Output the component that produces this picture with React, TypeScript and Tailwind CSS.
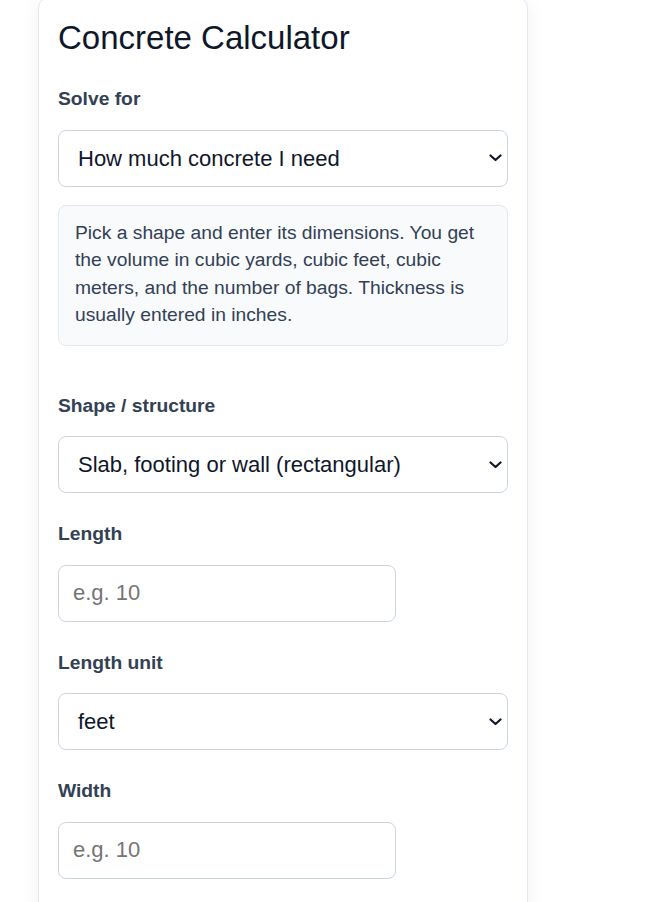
import { useState } from 'react'

function Chevron() {
  return (
    <svg
      className="pointer-events-none absolute right-[6px] top-1/2 -translate-y-1/2"
      width="13"
      height="8"
      viewBox="0 0 13 8"
      fill="none"
    >
      <path d="M1.5 1.5 L6.5 6 L11.5 1.5" stroke="#111827" strokeWidth="2.2" strokeLinecap="round" strokeLinejoin="round" />
    </svg>
  )
}

function Field({ label, children, className = '' }) {
  return (
    <div className={className}>
      <label className="block text-[19.25px] leading-[27.5px] font-bold text-[#334155] mb-[17px]">{label}</label>
      {children}
    </div>
  )
}

function Select({ value, onChange, options }) {
  return (
    <div className="relative w-full">
      <select
        value={value}
        onChange={(e) => onChange(e.target.value)}
        className="w-full h-[57px] appearance-none rounded-[8px] border border-[#cbd5e1] bg-white pl-[19px] pr-[30px] text-[22px] text-[#0f172a] outline-none"
      >
        {options.map((o) => (
          <option key={o} value={o}>
            {o}
          </option>
        ))}
      </select>
      <Chevron />
    </div>
  )
}

function NumberInput({ value, onChange }) {
  return (
    <input
      type="text"
      inputMode="decimal"
      value={value}
      onChange={(e) => onChange(e.target.value)}
      placeholder="e.g. 10"
      className="block w-[338px] h-[57px] rounded-[8px] border border-[#cbd5e1] bg-white px-[14px] text-[22px] text-[#0f172a] placeholder:text-[#757575] outline-none"
    />
  )
}

export default function App() {
  const [solveFor, setSolveFor] = useState('How much concrete I need')
  const [shape, setShape] = useState('Slab, footing or wall (rectangular)')
  const [length, setLength] = useState('')
  const [lengthUnit, setLengthUnit] = useState('feet')
  const [width, setWidth] = useState('')

  return (
    <div className="min-h-screen bg-white pl-[38px] font-['Liberation_Sans',Arial,sans-serif]">
      <div className="-mt-[3px] w-[490px] rounded-[11px] border border-[#e2e8f0] bg-white px-[19px] pt-[20px] pb-[40px] shadow-[0_4px_20px_rgba(15,23,42,0.06)]">
        <h1 className="text-[33px] leading-[40px] font-normal text-[#0f172a] mb-[27px]">Concrete Calculator</h1>

        <Field label="Solve for">
          <Select
            value={solveFor}
            onChange={setSolveFor}
            options={['How much concrete I need', 'How many bags I need', 'How much it will cost']}
          />
        </Field>

        <div className="mt-[18px] rounded-[8px] border border-[#e2e8f0] bg-[#f8fafc] pl-[16px] pr-[14px] pt-[13px] pb-[16px]">
          <p className="text-[19.25px] leading-[27.5px] text-[#334155]">
            Pick a shape and enter its dimensions. You get the volume in cubic yards, cubic feet, cubic meters, and the
            number of bags. Thickness is usually entered in inches.
          </p>
        </div>

        <Field label="Shape / structure" className="mt-[46px]">
          <Select
            value={shape}
            onChange={setShape}
            options={['Slab, footing or wall (rectangular)', 'Round column', 'Stairs', 'Curb and gutter']}
          />
        </Field>

        <Field label="Length" className="mt-[27px]">
          <NumberInput value={length} onChange={setLength} />
        </Field>

        <Field label="Length unit" className="mt-[27px]">
          <Select value={lengthUnit} onChange={setLengthUnit} options={['feet', 'inches', 'yards', 'meters', 'centimeters']} />
        </Field>

        <Field label="Width" className="mt-[27px]">
          <NumberInput value={width} onChange={setWidth} />
        </Field>
      </div>
    </div>
  )
}
